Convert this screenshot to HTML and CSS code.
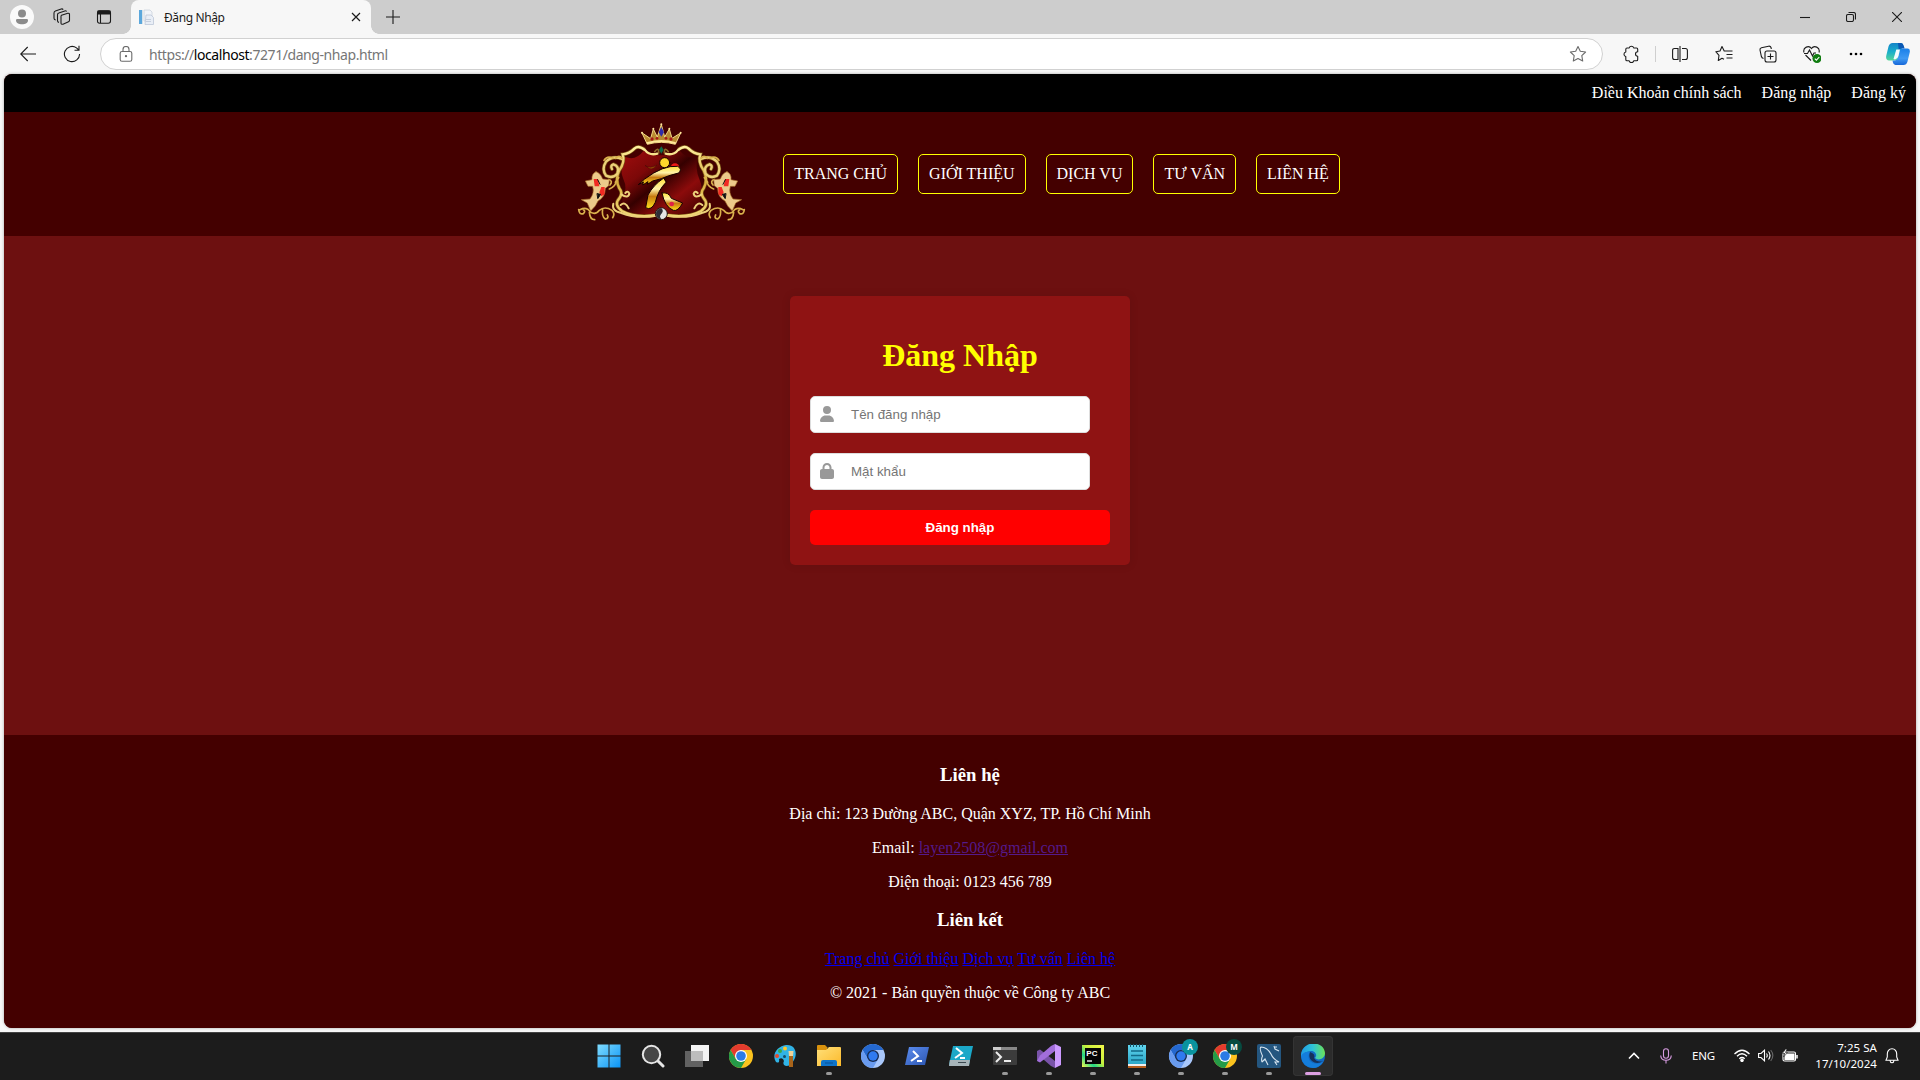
FILE: index.html
```html
<!DOCTYPE html>
<html lang="vi">
<head>
<meta charset="utf-8">
<title>Đăng Nhập</title>
<link rel="stylesheet" href="styles.css">
</head>
<body>
<svg class="defs" width="0" height="0" aria-hidden="true">
  <defs>
    <linearGradient id="gold" x1="0" y1="0" x2="0" y2="1"><stop offset="0" stop-color="#fff0a0"/><stop offset=".5" stop-color="#d9ac3c"/><stop offset="1" stop-color="#f3d978"/></linearGradient>
    <linearGradient id="shield" x1="0" y1="0" x2="1" y2="1"><stop offset="0" stop-color="#a00d0d"/><stop offset=".3" stop-color="#7c0808"/><stop offset=".48" stop-color="#350000"/><stop offset=".7" stop-color="#8c0b0b"/><stop offset="1" stop-color="#3a0000"/></linearGradient>
    <linearGradient id="figure" x1="0" y1="0" x2="0" y2="1"><stop offset="0" stop-color="#ffe23a"/><stop offset=".35" stop-color="#fff2a8"/><stop offset=".6" stop-color="#c77a10"/><stop offset="1" stop-color="#ffe11c"/></linearGradient>
    <linearGradient id="win" x1="0" y1="0" x2="1" y2="1"><stop offset="0" stop-color="#7fdcff"/><stop offset="1" stop-color="#0a93f5"/></linearGradient>
    <linearGradient id="folder" x1="0" y1="0" x2="1" y2="1"><stop offset="0" stop-color="#ffe07a"/><stop offset="1" stop-color="#fcb92a"/></linearGradient>
    <linearGradient id="blue" x1="0" y1="0" x2="1" y2="1"><stop offset="0" stop-color="#5b8df0"/><stop offset="1" stop-color="#2c55b0"/></linearGradient>
    <linearGradient id="cyan" x1="0" y1="0" x2="0" y2="1"><stop offset="0" stop-color="#5fd4ee"/><stop offset="1" stop-color="#27a3c4"/></linearGradient>
    <linearGradient id="edgeTop" x1="0" y1="0" x2="1" y2="0"><stop offset="0" stop-color="#1f9be6"/><stop offset=".5" stop-color="#2fc3d6"/><stop offset="1" stop-color="#6be257"/></linearGradient>
    <linearGradient id="pycharm" x1="0" y1="1" x2="1" y2="0"><stop offset="0" stop-color="#fcf84a"/><stop offset=".3" stop-color="#21d789"/><stop offset=".55" stop-color="#c8f03c"/><stop offset="1" stop-color="#f4f84a"/></linearGradient>
    <linearGradient id="copA" x1="0" y1="0" x2="0" y2="1"><stop offset="0" stop-color="#1484c8"/><stop offset=".5" stop-color="#18aecb"/><stop offset="1" stop-color="#55d69a"/></linearGradient>
    <linearGradient id="copB" x1="0" y1="0" x2="0" y2="1"><stop offset="0" stop-color="#1a7fe8"/><stop offset=".6" stop-color="#3f9af3"/><stop offset="1" stop-color="#1767d8"/></linearGradient>
  </defs>
</svg>

<div class="tabbar">
  <div class="avatar"><svg width="24" height="24"><circle cx="12" cy="12" r="12" fill="#fafafa"/><circle cx="12" cy="8.500" r="4" fill="#8b8b8b"/><path d="M6 15.200Q6 14 7.200 14H16.800Q18 14 18 15.200C18 18 15.500 19.300 12 19.300S6 18 6 15.200z" fill="#8b8b8b"/></svg></div>
  <div class="tab-tool workspaces"><svg class="line" width="18" height="18" viewBox="0 0 18 18"><path d="M8.500 7.200 14.800 5.300Q16.500 5 16.500 6.500V12.200Q16.500 13.300 15.500 13.700L10 16.200Q8 16.700 8 15V8.500Q8 7.500 8.500 7.200z" stroke-linejoin="round"/><path d="M6 14.400Q4.500 14.200 4.500 12.700V6.700Q4.500 5.400 5.800 5L11.800 2.900Q13 2.500 13.600 3.600M2.700 12Q1 11.600 1 10.200V5Q1 3.600 2.400 3.100L8.200 1Q9.500.6 10.200 1.600"/></svg></div>
  <div class="tab-tool tabmenu"><svg class="line" width="16" height="16" viewBox="0 0 16 16"><rect x="1.500" y="1.700" width="13" height="12.600" rx="2.200"/><path d="M1.500 3.500H14.500" stroke-width="4"/><path d="M4.500 5V14"/></svg></div>
  <div class="tab">
    <svg class="favicon" width="16" height="16" viewBox="0 0 16 16"><rect width="3" height="14" x="1" y="1" fill="#5ba7dc"/><rect x="4" y="1" width="1" height="14" fill="#d5e2ea"/><path d="M6 1H12L14 3V12H6z" fill="#f1f4f9" stroke="#ccd3dd" stroke-width=".8"/><path d="M8 6H13L15.500 8.500V15.500H7z" fill="#e9eef6" stroke="#bcc7d8" stroke-width=".8"/><path d="M8 10.500h5M8 12.500h5" stroke="#c6cfdd"/></svg>
    <span class="tab-title">Đăng Nhập</span>
    <svg class="line tab-close" width="10" height="10" viewBox="0 0 10 10"><path d="M1 1 9 9M9 1 1 9" stroke-width="1.200"/></svg>
  </div>
  <div class="newtab"><svg class="line" width="14" height="14" viewBox="0 0 14 14"><path d="M7 0V14M0 7H14"/></svg></div>
  <div class="controls">
    <span><svg class="line" width="10" height="10"><path d="M0 5.500H10"/></svg></span>
    <span><svg class="line" width="10" height="10"><rect x=".5" y="2.500" width="7" height="7" rx="1.500"/><path d="M2.500.5H7.500Q9.500.5 9.500 2.500V7.500"/></svg></span>
    <span><svg class="line" width="10" height="10"><path d="M0 0 10 10M10 0 0 10"/></svg></span>
  </div>
</div>

<div class="toolbar">
  <div class="tool back"><svg class="line" width="16" height="16" viewBox="0 0 16 16"><path d="M16 8H.7M7.700 1 .7 8 7.700 15"/></svg></div>
  <div class="tool"><svg class="line" width="18" height="18" viewBox="0 0 18 18"><path d="M16.600 9A7.600 7.600 0 1 1 13.500 2.900L15.800 5M16 .8V5.300H11.500"/></svg></div>
  <div class="address">
    <svg class="line grey lock" width="14" height="16" viewBox="0 0 14 16"><rect x="1.200" y="5.500" width="11.600" height="9.700" rx="1.800"/><path d="M4 5.500V3.500a3 3 0 0 1 6 0V5.500"/><circle cx="7" cy="10.200" r=".6" fill="#666"/></svg>
    <span class="url">https://<b>localhost</b>:7271/dang-nhap.html</span>
    <svg class="line grey star" width="18" height="18" viewBox="0 0 18 18"><path d="M9 1.500 11.300 6.300 16.600 7 12.800 10.700 13.700 16 9 13.500 4.300 16 5.200 10.700 1.400 7 6.700 6.300z" stroke-linejoin="round"/></svg>
  </div>
  <div class="actions">
    <span><svg class="line" width="18" height="18" viewBox="0 0 18 18"><path d="M5 3H7.200A2.300 2.300 0 0 1 11.700 3H14.500Q15.700 3 15.700 4.200V6.800A2.200 2.200 0 0 0 15.700 11.200V14.500Q15.700 15.800 14.500 15.800H11.700A2.300 2.300 0 0 1 7.200 15.800H5Q3.800 15.800 3.800 14.500V11.500A2.300 2.300 0 0 1 3.800 7V4.200Q3.800 3 5 3z" stroke-linejoin="round"/></svg></span>
    <i class="divider"></i>
    <span><svg class="line" width="16" height="16" viewBox="0 0 16 16"><path d="M6 2.500H2.500Q.6 2.500.6 4.500V11.500Q.6 13.500 2.500 13.500H6zM10 2.500H13.500Q15.400 2.500 15.400 4.500V11.500Q15.400 13.500 13.500 13.500H10M8 0V16"/></svg></span>
    <span><svg class="line" width="18" height="18" viewBox="0 0 18 18"><path d="M11.500 6H9.200L7 1.500 5 6 .8 6.700 4 10.300 3.300 15.500 7 13.200 9 14.200M10.500 6H17.500M11.500 9.500H17.500M11.500 13H17.500" stroke-linejoin="round"/></svg></span>
    <span><svg class="line" width="18" height="18" viewBox="0 0 18 18"><rect x="6" y="6" width="11" height="11" rx="2"/><path d="M11.500 8.500V14.500M8.500 11.500H14.500M4.500 13.500Q2.800 13 2.400 11.500L1 5Q.7 3.200 2.500 2.700L9.500 1.200Q11.500.9 12 2.500L12.300 4"/></svg></span>
    <span><svg class="line" width="18" height="18" viewBox="0 0 18 18"><path d="M1 7.500C-.5 2 6 0 8.500 3.500 11 0 17.500 2 16 7.500M2.500 10 8 15.500M1 8.500H4.500L6.500 5 9.500 11 11 8H13"/><circle cx="14" cy="13.500" r="4.500" fill="#107c10" stroke="none"/><path d="M11.800 13.600 13.400 15.200 16.300 12" stroke="#fff"/></svg></span>
    <span><svg width="14" height="4"><circle cx="2" cy="2" r="1.300"/><circle cx="7" cy="2" r="1.300"/><circle cx="12" cy="2" r="1.300"/></svg></span>
    <span class="copilot"><svg width="24" height="24" viewBox="0 0 24 24"><path d="M6.500 1H15Q17.500 1 16.700 4L13 15Q12 18.500 8.500 18.500H3Q-.5 18.500.2 14L2.500 4.500Q3.500 1 6.500 1z" fill="url(#copA)"/><path d="M12 1H15Q17 1.200 17.700 3.500L18.600 6.500H15.500Q13.500 6.500 12.800 8.500z" fill="#0a58b4"/><path d="M15.800 6.500H21.500Q24.500 6.500 23.700 10.500L21.500 19.500Q20.500 23 17.500 23H9.500Q7 22.500 6.500 18.500H8.500Q11 18.500 12 15.500L14 9Q14.500 6.500 15.800 6.500z" fill="url(#copB)"/><path d="M10.300 7.500H14L12.500 14Q11.800 17 9 17.500L7.500 17z" fill="#f4fbff"/></svg></span>
  </div>
</div>

<div class="page">
  <div class="top-links"><a>Điều Khoản chính sách</a><a>Đăng nhập</a><a>Đăng ký</a></div>
  <header class="header">
    <svg class="logo" width="170" height="102" viewBox="48 30 510 306" fill="none" stroke-linecap="round">
      <path d="M196 138Q228 150 250 120L290 133H320L360 120Q382 146 414 138Q404 172 418 204T420 262L424 300Q360 320 304 309Q250 320 184 300L188 262Q204 232 190 204T196 138z" fill="url(#shield)"/>
      <g id="half">
        <g stroke="#7a5215" stroke-width="11">
          <path d="M252 114Q236 102 224 112Q208 128 188 130Q196 152 178 178Q164 206 178 232Q190 246 178 262Q160 282 186 300Q226 322 290 312"/>
          <path d="M186 144Q158 132 138 152Q124 174 138 194Q158 204 172 188Q180 166 160 160Q150 164 156 174"/>
        </g>
        <g stroke="#ecd07a" stroke-width="7">
          <path d="M292 128Q268 134 256 118Q236 102 224 112Q208 128 188 130Q196 152 178 178Q164 206 178 232Q190 246 178 262Q160 282 186 300Q226 322 290 312" stroke="url(#gold)"/>
          <path d="M186 144Q158 132 138 152Q124 174 138 194Q158 204 172 188Q180 166 160 160Q150 164 156 174"/>
          <path d="M184 250Q204 264 208 248Q204 238 196 246M160 278Q154 300 184 306Q230 324 288 314M206 292Q196 270 182 282" stroke-width="6"/>
        </g>
        <g stroke="#d9b04c" stroke-width="5">
          <path d="M172 202Q168 226 148 234M146 206Q160 210 150 222M132 148Q142 132 160 142M166 142Q178 130 186 142M176 200 166 214"/>
          <path d="M56 296Q58 312 70 308Q78 300 70 296M60 296Q80 286 92 304Q108 312 118 298Q134 284 156 298Q166 308 158 320M88 304Q90 326 104 326M128 294Q124 316 136 324Q148 322 142 312"/>
          <path d="M284 122Q296 106 296 126" stroke="#8f6a28"/>
        </g>
      </g>
      <use href="#half" transform="translate(609 0) scale(-1 1)"/>
      <g id="fish"><path d="M108 182Q94 188 96 206L76 210 84 226 98 226Q104 246 90 264L64 266 82 276 92 300Q108 286 114 270Q136 258 136 232L146 224 148 206 128 204Q122 186 108 182z" fill="#ecc98a" stroke="#a9702c" stroke-width="2"/><path d="M101 204H114L118 226 104 226zM124 228H134V250L124 256 118 244z" fill="#f12a22"/><path d="M113 206 120 220M112 248 122 250 114 262z" fill="#111" stroke="#111" stroke-width="3"/></g>
      <use href="#fish" transform="translate(609 0) scale(-1 1)"/>
      <path d="M246 66 262 100Q304 88 346 100L362 66 336 82 328 54 314 78 304 40 292 78 280 54 272 82z" fill="#b98a30" stroke="#efd684" stroke-width="3"/><path d="M263 96Q304 84 345 96" stroke="#ffe89a" stroke-width="6"/><path d="M304 48 312 64 304 77 296 64z" fill="#2f2ca8"/>
      <g fill="#a71916"><circle cx="276" cy="84" r="5"/><circle cx="291" cy="82" r="4"/><circle cx="318" cy="82" r="4"/><circle cx="333" cy="84" r="5"/></g><g fill="#ffe69b"><circle cx="246" cy="65" r="3"/><circle cx="280" cy="53" r="3"/><circle cx="304" cy="40" r="3"/><circle cx="328" cy="53" r="3"/><circle cx="362" cy="65" r="3"/></g>
      <path d="M304 106 311 116 304 128 297 116z" fill="#0d6b4a"/>
      <path d="M256 164Q270 174 290 163Q280 176 268 172z" fill="#a75009" stroke="#2c0800" stroke-width="1"/>
      <circle cx="345" cy="170" r="13" fill="#ee1c16"/>
      <g stroke="#170000" stroke-width="3"><path d="M236 220 254 204Q310 162 353 166Q368 174 356 186Q322 194 304 203L278 210 262 220 264 212 248 222 250 214z" fill="url(#figure)"/><path d="M310 202Q280 222 264 252L257 290Q274 300 286 274Q294 238 318 214z" fill="url(#figure)"/><path d="M306 246Q326 242 334 262L368 276Q354 302 340 298Q314 288 306 246z" fill="url(#figure)"/><circle cx="314" cy="155" r="15" fill="#ffd72b"/></g><circle cx="335" cy="279" r="7" fill="#df2047"/>
      <circle cx="304" cy="308" r="18" fill="#888" stroke="#2b1b12" stroke-width="3"/><path d="M304 292A16 16 0 0 1 304 324Q296 316 304 308T304 292z" fill="#e5e5e5"/><path d="M304 292A16 16 0 0 0 304 324Q296 316 304 308T304 292z" fill="#303038"/>
    </svg>
    <nav class="nav"><a>TRANG CHỦ</a><a>GIỚI THIỆU</a><a>DỊCH VỤ</a><a>TƯ VẤN</a><a>LIÊN HỆ</a></nav>
  </header>
  <main class="main">
    <form class="card">
      <h1>Đăng Nhập</h1>
      <div class="field"><svg width="14" height="16" viewBox="0 0 448 512"><path d="M224 256A128 128 0 1 0 224 0a128 128 0 1 0 0 256zM178.300 304C79.800 304 0 383.800 0 482.300C0 498.700 13.300 512 29.700 512H418.300c16.400 0 29.700-13.300 29.700-29.700C448 383.800 368.200 304 269.700 304H178.300z"/></svg><span>Tên đăng nhập</span></div>
      <div class="field"><svg width="14" height="16" viewBox="0 0 448 512"><path d="M144 144v48H304V144c0-44.200-35.800-80-80-80s-80 35.800-80 80zM80 192V144C80 64.500 144.500 0 224 0s144 64.500 144 144v48h16c35.300 0 64 28.700 64 64V448c0 35.300-28.700 64-64 64H64c-35.300 0-64-28.700-64-64V256c0-35.300 28.700-64 64-64H80z"/></svg><span>Mật khẩu</span></div>
      <button type="button">Đăng nhập</button>
    </form>
  </main>
  <footer class="footer">
    <h3>Liên hệ</h3>
    <p>Địa chỉ: 123 Đường ABC, Quận XYZ, TP. Hồ Chí Minh</p>
    <p>Email: <a class="visited">layen2508@gmail.com</a></p>
    <p>Điện thoại: 0123 456 789</p>
    <h3>Liên kết</h3>
    <p><a class="link">Trang chủ</a> <a class="link">Giới thiệu</a> <a class="link">Dịch vụ</a> <a class="link">Tư vấn</a> <a class="link">Liên hệ</a></p>
    <p>© 2021 - Bản quyền thuộc về Công ty ABC</p>
  </footer>
</div>

<div class="taskbar">
  <div class="apps">
    <span><svg width="24" height="24" fill="url(#win)"><path d="M.5.500h11v11H.5zM12.500.500h11v11h-11zM.5 12.500h11v11H.5zM12.500 12.500h11v11h-11z"/></svg></span>
    <span><svg width="24" height="24" fill="none" stroke="#e6e6e6"><path d="M17 17 22 22" stroke-width="3" stroke-linecap="round"/><circle cx="10.500" cy="10.500" r="8.700" fill="#474747" stroke-width="2"/></svg></span>
    <span><svg width="24" height="24"><path d="M6 1H24V17H6z" fill="#f4f4f4"/><path d="M0 7H18V23H0z" fill="#626262"/><path d="M6 7H18V17H6z" fill="#bdbdbd"/></svg></span>
    <span><svg width="24" height="24" viewBox="0 0 24 24"><g id="chrome"><circle cx="12" cy="12" r="12" fill="#fbc31e"/><path d="M1.600 6A12 12 0 0 1 22.400 6H12L6.800 15z" fill="#e33b2e"/><path d="M1.600 6A12 12 0 0 0 12 24L17.200 15H6.800z" fill="#259b48"/><circle cx="12" cy="12" r="6" fill="#fff"/><circle cx="12" cy="12" r="4.800" fill="#2c7be5"/></g></svg></span>
    <span><svg width="24" height="24"><path d="M13 1C22 0 25 9 21 16Q18 22 13 22 9 21 11 17 10 13 6 15 7 20 3 18C-2 10 5 2 13 1z" fill="#31b3e6"/><circle cx="4" cy="12" r="2" fill="#e44b2b"/><circle cx="7" cy="7" r="2" fill="#39a845"/><circle cx="12" cy="4.500" r="2" fill="#ffc928"/><path d="M16 12H20V23H16z" fill="#a8641b"/><path d="M15.500 7H20.500L20 12H16z" fill="#efd39a"/><circle cx="11.500" cy="12.500" r="1.500" fill="#164d67"/></svg></span>
    <span class="open"><svg width="24" height="24"><path d="M0 2Q0 1 1 1H8L11 4H10V8H0z" fill="#d9920d"/><path d="M0 6H9L12 3H23Q24 3 24 4V22H0z" fill="url(#folder)"/><path d="M4 22V18Q4 16 6 16H18Q20 16 20 18V22z" fill="#0f74c9"/><path d="M8 19H16" stroke="#0a4e92"/></svg></span>
    <span><svg width="24" height="24" viewBox="0 0 24 24"><g id="chromium"><circle cx="12" cy="12" r="12" fill="#a9c7fa"/><path d="M1.600 6A12 12 0 0 1 22.400 6H12L6.800 15z" fill="#2468cf"/><path d="M1.600 6A12 12 0 0 0 12 24L17.200 15H6.800z" fill="#699bef"/><circle cx="12" cy="12" r="6" fill="#172b50"/><circle cx="12" cy="12" r="4.700" fill="#2f7af0"/></g></svg></span>
    <span><svg width="24" height="20"><path d="M4 1H24L20 19H0z" fill="url(#blue)"/><path d="M8 5 13 10 6 15M12 15H17" fill="none" stroke="#fff" stroke-width="2"/></svg></span>
    <span><svg width="24" height="20"><path d="M4 0H24L20 19H0z" fill="#1ba8c8"/><path d="M.8 14H21L20 20H0z" fill="#a7b4b9"/><path d="M7 2 13 7 6 12M11 12H16" fill="none" stroke="#fff" stroke-width="2"/><path d="M9 16.500H17" stroke="#3c4a51"/></svg></span>
    <span class="open"><svg width="24" height="20"><rect y="1" width="24" height="18" rx="1" fill="#3c3c3c"/><path d="M0 1H24V4H0z" fill="#888"/><path d="M0 1H8V4H0z" fill="#ccc"/><path d="M3 6 8 11 3 16M11 15H18" fill="none" stroke="#ececec" stroke-width="2"/></svg></span>
    <span class="open"><svg width="24" height="24"><path d="M0 7 3 5.500 18 17V24L14 22 3 12.500V17L0 17z" fill="#7953a9"/><path d="M0 17 3 18.500 18 7V0L14 2 3 11.500z" fill="#a26edb"/><path d="M18 0 24 3V21L18 24z" fill="#cc9aff"/></svg></span>
    <span class="open"><svg width="22" height="22"><rect width="22" height="22" fill="url(#pycharm)"/><rect x="3" y="3" width="16" height="16" fill="#050505"/><text x="4.300" y="11" class="pc">PC</text><path d="M5 16H10" stroke="#fff" stroke-width="1.300"/></svg></span>
    <span class="open"><svg width="20" height="24"><path d="M1 1H19V22H1z" fill="url(#cyan)"/><path d="M3.500 0V3M6.500 0V3M9.500 0V3M12.500 0V3M15.500 0V3" stroke="#14556c"/><path d="M4 7H16M4 11.500H16M4 16H16" stroke="#126a88" stroke-width="1.500"/><path d="M1 20H19V22H1z" fill="#eee"/><path d="M1 22H19V24H1z" fill="#b65d1c"/></svg></span>
    <span class="open"><svg width="34" height="34" viewBox="-5 -5 34 34"><use href="#chromium"/><circle cx="21" cy="3" r="8" fill="#0a939e"/><text x="21" y="6" class="badge">A</text></svg></span>
    <span class="open"><svg width="34" height="34" viewBox="-5 -5 34 34"><use href="#chrome"/><circle cx="21" cy="3" r="8" fill="#064b40"/><text x="21" y="6" class="badge">M</text></svg></span>
    <span class="open"><svg width="24" height="24"><rect width="24" height="24" rx="2" fill="#24567f"/><path d="M5 18Q4 15 5.500 12 2 4 4 3 10 3 14 10 16 15 22 18L18 18 20 21M5 18 8 15 11 21M17 2 18 5 22 7M18 3H20" fill="none" stroke="#d6e4ef" stroke-width="1.100"/></svg></span>
    <span class="open active"><svg width="24" height="24"><circle cx="12" cy="12" r="12" fill="#1169c2"/><path d="M0 11C1-4 23-4 24 9 24 15 17 17 14 14 17 11 14 7 10 7Q4 7 0 13z" fill="url(#edgeTop)"/><path d="M0 12Q3 7 9 8 6 12 9 17 14 22 22 18 18 24 12 24 1 23 0 12z" fill="#147ddb"/><path d="M9 8Q7 14 11 17 16 21 22 17 16 19 13 14 15 10 9 8z" fill="#15315a"/></svg></span>
  </div>
  <div class="tray">
    <svg width="12" height="8" class="w chevron"><path d="M1 6.500 6 1.500 11 6.500" stroke-width="1.600"/></svg>
    <svg width="12" height="16" class="w mic"><rect x="3.500" y=".7" width="5" height="9.500" rx="2.500"/><path d="M.7 7.500Q1 12.300 6 12.300T11.300 7.500M6 12.300V15.500"/></svg>
    <span class="lang">ENG</span>
    <svg width="16" height="13" class="w wifi"><path d="M.5 5Q8-2.500 15.500 5M3 7.300Q8 2.300 13 7.300M5.300 9.700Q8 7.200 10.700 9.700" stroke-width="1.300"/><circle cx="8" cy="11.300" r="1.200" fill="#fff"/></svg>
    <svg width="16" height="13" class="w speaker"><path d="M.6 4.500H3L6.500 1.200V11.800L3 8.500H.6zM8.500 4.500Q10 6.500 8.500 8.500M10.500 2.500Q13.500 6.500 10.500 10.500"/><path d="M12.700 1Q17 6.500 12.700 12" stroke="#666"/></svg>
    <svg width="16" height="14" class="w battery"><rect x="1" y="3" width="12.500" height="9" rx="1.500"/><path d="M3 5H12V10.500H3z" fill="#fff"/><path d="M15 6V9.500" stroke-width="1.500"/><path d="M3.500 0 .5 4.500H3L1.500 8 5.500 3.500H3.500L5 0z" fill="#fff" stroke="#1c1c1c" stroke-width=".6"/></svg>
    <div class="clock"><span>7:25 SA</span><span>17/10/2024</span></div>
    <svg width="14" height="16" class="w"><path d="M7 .8C4 .8 2.300 3 2.300 6V9L1 12.300H13L11.700 9V6C11.700 3 10 .8 7 .8zM5 12.500Q5.200 14.700 7 14.700T9 12.500"/></svg>
  </div>
</div>
</body>
</html>
```
FILE: styles.css
```css
* { box-sizing: border-box; }
body {
  margin: 0;
  width: 1920px;
  height: 1080px;
  overflow: hidden;
  display: flex;
  flex-direction: column;
  background: #f7f7f7;
  font-family: "Liberation Serif", "Times New Roman", serif;
  font-size: 16px;
}
svg { display: block; flex: none; }
.defs { position: absolute; }
.line { fill: none; stroke: #1b1b1b; stroke-width: 1.1; }
.line.grey { stroke: #6b6b6b; }

/* Browser tab strip */
.tabbar { height: 34px; flex: none; display: flex; align-items: center; background: #cdcdcd; font-family: "Noto Sans", sans-serif; }
.avatar { width: 44px; display: flex; justify-content: center; }
.tab-tool { display: flex; justify-content: center; }
.workspaces { width: 36px; }
.tabmenu { width: 48px; }
.tab {
  width: 240px; height: 34px; margin-left: 3px; padding: 0 10px 0 7px;
  display: flex; align-items: center; gap: 10px;
  background: #f7f7f7; border-radius: 8px 8px 0 0;
  position: relative;
}
.tab::before, .tab::after { content: ""; position: absolute; bottom: 0; width: 8px; height: 8px; }
.tab::before { left: -8px; background: radial-gradient(circle at 0 0, transparent 7.5px, #f7f7f7 8px); }
.tab::after { right: -8px; background: radial-gradient(circle at 100% 0, transparent 7.5px, #f7f7f7 8px); }
.tab-title { flex: 1; font-size: 12px; letter-spacing: -0.4px; color: #1b1b1b; }
.newtab { width: 43px; display: flex; justify-content: center; }
.controls { margin-left: auto; display: flex; }
.controls span { width: 46px; display: flex; justify-content: center; }

/* Browser toolbar */
.toolbar { height: 40px; flex: none; display: flex; align-items: center; padding-left: 6px; }
.tool { width: 44px; display: flex; justify-content: center; }
.address {
  width: 1503px; height: 32px; margin-left: 6px; padding: 0 15px 0 18px;
  display: flex; align-items: center;
  background: #fff; border: 1px solid #d1d1d1; border-radius: 16px;
  font-family: "Noto Sans", sans-serif; font-size: 14px; color: #767676;
}
.url { flex: 1; margin-left: 16px; letter-spacing: -0.43px; }
.url b { font-weight: 400; color: #000; }
.actions { display: flex; align-items: center; margin-left: 6px; }
.actions span { width: 44px; display: flex; justify-content: center; }
.actions .copilot { width: 40px; }
.divider { width: 1px; height: 16px; margin: 0 2px; background: #cfcfcf; }

/* Web page */
.page {
  width: 1912px; height: 954px; margin: 0 4px; flex: none;
  display: flex; flex-direction: column;
  border-radius: 8px; overflow: hidden; background: #6d1010; color: #fff;
  box-shadow: 0 0 3px rgba(0, 0, 0, .35);
}
.top-links { height: 38px; flex: none; padding-right: 10px; display: flex; justify-content: flex-end; align-items: center; gap: 20px; background: #000; }
.header { height: 124px; flex: none; padding: 9px 4px 13px 0; display: flex; justify-content: center; align-items: center; gap: 37px; background: #440000; }
.nav { display: flex; gap: 20px; margin-top: 4px; }
.nav a { padding: 10px; line-height: 18px; border: 1px solid #ff0; border-radius: 5px; }
.main { height: 499px; flex: none; padding-top: 60px; }
.card { width: 340px; height: 269px; margin: 0 auto; padding: 20px; background: #8f1313; border-radius: 5px; box-shadow: 0 0 10px rgba(0, 0, 0, .1); font-family: "Liberation Sans", Arial, sans-serif; font-size: 13.333px; }
.card h1 { margin: 21px 0 22px; line-height: 37px; text-align: center; font-family: "Liberation Serif", serif; font-size: 32px; color: #ff0; }
.field { width: 280px; height: 37px; margin-bottom: 20px; padding-left: 9px; display: flex; align-items: center; gap: 17px; background: #fff; border: 1px solid #ddd; border-radius: 5px; color: #757575; }
.field svg { fill: #999; margin-bottom: 2px; }
.card button { display: block; width: 300px; height: 35px; padding: 0; border: 0; border-radius: 5px; background: #f00; color: #fff; font: bold 13.333px "Liberation Sans", Arial, sans-serif; }
.footer { height: 293px; padding: 10px 0 0 20px; background: #440000; text-align: center; overflow: hidden; }
.footer h3 { margin: 19px 0 20px; font-size: 18.72px; line-height: 21px; }
.footer p + h3 { margin-top: 18px; }
.footer p { margin: 16px 0; line-height: 18px; }
.footer a { text-decoration: underline; }
.visited { color: #551a8b; }
.link { color: #0000ee; }

/* Windows taskbar */
.taskbar { height: 48px; margin-top: 4px; flex: none; display: flex; padding-left: 587px; background: #1c1c1c; border-top: 1px solid #444; color: #fff; font-family: "Noto Sans", sans-serif; }
.apps { display: flex; align-items: center; padding-bottom: 1px; }
.apps span { position: relative; width: 44px; height: 40px; display: flex; align-items: center; justify-content: center; }
.open::after { content: ""; position: absolute; left: 19px; bottom: 1px; width: 6px; height: 3px; border-radius: 2px; background: #999; }
.apps .active { width: 40px; margin: 0 2px; border-radius: 4px; background: #2b2b2b; box-shadow: inset 0 0 0 1px #343434; }
.active::after { left: 12px; width: 16px; background: #dc9fe2; }
.pc { font: bold 8px "Liberation Sans", sans-serif; fill: #fff; }
.badge { font: bold 8px "Noto Sans", sans-serif; fill: #fff; text-anchor: middle; }
.tray { display: flex; align-items: center; margin-left: auto; padding: 0 21px 2px 0; }
.w { fill: none; stroke: #fff; stroke-width: 1.1; }
.mic { stroke: #d69be0; margin-left: 20px; }
.lang { margin-left: 20px; width: 24px; font-size: 11.5px; letter-spacing: -0.2px; }
.wifi { margin-left: 18px; }
.speaker { margin-left: 8px; }
.battery { margin-left: 8px; }
.clock { width: 79px; margin-right: 8px; display: flex; flex-direction: column; align-items: flex-end; font-size: 11.5px; line-height: 16px; letter-spacing: 0.05px; white-space: nowrap; }
```
